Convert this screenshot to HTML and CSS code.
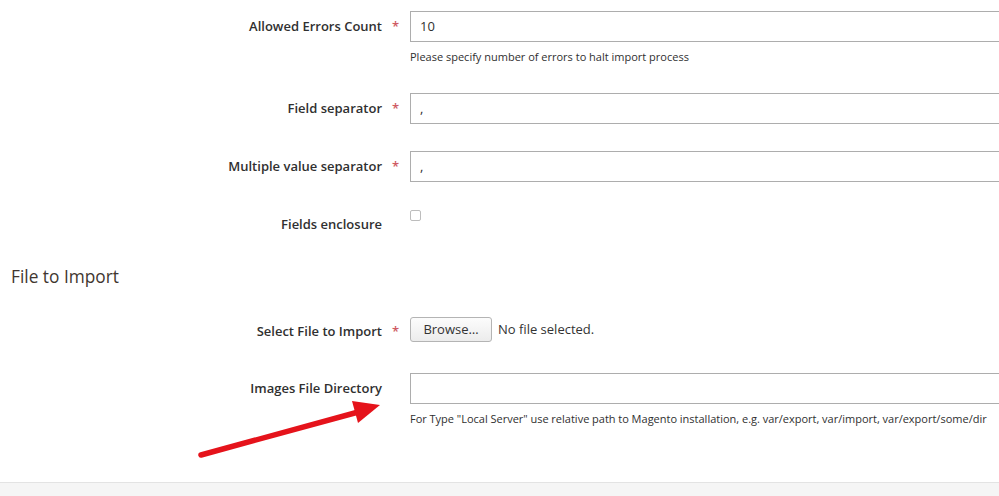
FILE: index.html
```html
<!DOCTYPE html>
<html>
<head>
<meta charset="utf-8">
<link rel="stylesheet" href="styles.css">
</head>
<body>
<div class="page">
  <div class="form">
    <div class="field f1">
      <div class="label-cell"><span class="label">Allowed Errors Count</span><span class="req">*</span></div>
      <div class="control">
        <div class="input">10</div>
        <div class="note">Please specify number of errors to halt import process</div>
      </div>
    </div>
    <div class="field f2">
      <div class="label-cell"><span class="label">Field separator</span><span class="req">*</span></div>
      <div class="control"><div class="input">,</div></div>
    </div>
    <div class="field f3">
      <div class="label-cell"><span class="label">Multiple value separator</span><span class="req">*</span></div>
      <div class="control"><div class="input">,</div></div>
    </div>
    <div class="field f4">
      <div class="label-cell"><span class="label">Fields enclosure</span><span class="req"></span></div>
      <div class="control"><span class="checkbox"></span></div>
    </div>
    <h2 class="legend">File to Import</h2>
    <div class="field f5">
      <div class="label-cell lc5"><span class="label">Select File to Import</span><span class="req">*</span></div>
      <div class="control file-control"><span class="browse">Browse…</span><span class="nofile">No file selected.</span></div>
    </div>
    <div class="field f6">
      <div class="label-cell"><span class="label">Images File Directory</span><span class="req"></span></div>
      <div class="control">
        <div class="input"></div>
        <div class="note note-long">For Type "Local Server" use relative path to Magento installation, e.g. var/export, var/import, var/export/some/dir</div>
      </div>
    </div>
  </div>
  <div class="footer"></div>
  <svg class="arrow" width="999" height="496" viewBox="0 0 999 496">
    <line x1="201" y1="455" x2="362" y2="411" stroke="#e5131b" stroke-width="5.5" stroke-linecap="round"/>
    <polygon points="380,405 352,401 358,423" fill="#e5131b"/>
  </svg>
</div>
</body>
</html>
```
FILE: styles.css
```css
html, body {
  margin: 0;
  padding: 0;
  background: #fff;
  overflow: hidden;
}
body {
  width: 999px;
  height: 496px;
  font-family: "Open Sans", "Liberation Sans", sans-serif;
  color: #303030;
}
.page {
  position: relative;
  height: 496px;
  overflow: hidden;
}
.form {
  padding-top: 11px;
}
.field {
  display: grid;
  grid-template-columns: 410px 700px;
}
.f1 { margin-bottom: 28px; }
.f2 { margin-bottom: 27px; }
.f3 { margin-bottom: 27px; }
.f4 { margin-bottom: 32px; }
.f5 { margin-bottom: 32px; }
.label-cell {
  display: flex;
  justify-content: flex-end;
  align-items: flex-start;
  padding-top: 6px;
  line-height: 18px;
}
.lc5 { padding-top: 5px; }
.label {
  font-size: 13px;
  font-weight: 600;
  color: #303030;
}
.req {
  width: 28px;
  padding-left: 10px;
  box-sizing: border-box;
  color: #cf5a63;
  font-size: 13px;
  font-weight: 600;
}
.input {
  height: 31px;
  box-sizing: border-box;
  border: 1px solid #adadad;
  padding: 0 9px;
  font-size: 13px;
  line-height: 29px;
  color: #303030;
}
.note {
  margin-top: 7px;
  font-size: 11px;
  line-height: 16px;
  color: #303030;
  white-space: nowrap;
}
.note-long {
  word-spacing: -0.1px;
}
.checkbox {
  display: block;
  width: 11px;
  height: 11px;
  margin-top: 1px;
  border: 1px solid #bdbdbd;
  border-radius: 2px;
  box-sizing: border-box;
}
.file-control {
  display: flex;
  align-items: center;
  height: 24px;
}
.browse {
  box-sizing: border-box;
  width: 82px;
  height: 25px;
  border: 1px solid #b4b4b4;
  border-radius: 3px;
  background: linear-gradient(#fcfcfc, #ececec);
  font-size: 13px;
  line-height: 23px;
  text-align: center;
  color: #333;
}
.nofile {
  margin-left: 6px;
  font-size: 13px;
  color: #333;
}
.legend {
  margin: 0 0 28px 11px;
  font-size: 17.3px;
  font-weight: 500;
  line-height: 24px;
  color: #41362f;
}
.footer {
  margin-top: 55px;
  height: 20px;
  border-top: 1px solid #e3e3e3;
  background: #f5f5f5;
}
.arrow {
  position: absolute;
  left: 0;
  top: 0;
  pointer-events: none;
}
```
